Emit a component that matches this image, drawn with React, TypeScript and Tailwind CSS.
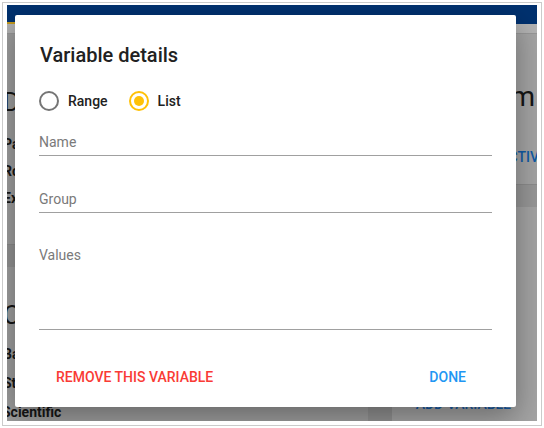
import React from 'react';

const Radio: React.FC<{ checked?: boolean; label: string }> = ({ checked, label }) => (
  <label className="flex items-center">
    <span
      className={`w-[20px] h-[20px] rounded-full border-2 flex items-center justify-center ${
        checked ? 'border-[#ffc107]' : 'border-[#757575]'
      }`}
    >
      {checked && <span className="w-[10px] h-[10px] rounded-full bg-[#ffc107]" />}
    </span>
    <span className="ml-[9px] text-[14px] font-medium text-[#212121] leading-[20px]">{label}</span>
  </label>
);

const Field: React.FC<{ label: string; className?: string; pad?: string }> = ({ label, className, pad }) => (
  <div className={`border-b border-[#a0a0a0] ${pad || 'pb-[3px]'} ${className || ''}`}>
    <div className="h-[20px] leading-[20px] text-[14px] text-[#7a7a7a]">{label}</div>
  </div>
);

export default function App() {
  return (
    <div className="w-[544px] h-[428px] bg-white p-[2px] font-['Roboto',sans-serif]">
      <div className="h-full border border-[#cbcbcb] pt-[2px] px-[4px] pb-[4px] bg-white">
        {/* page behind the dialog, dimmed */}
        <div className="relative w-full h-full overflow-hidden bg-[#9e9e9e]">
          <div className="h-[17px] bg-[#01316f]" />
          <div className="h-[2px] flex">
            <div className="w-[110px] bg-[#c49a1c]" />
            <div className="flex-1 bg-[#01316f]" />
          </div>
          <div className="h-[10px] bg-[#b3b3b3] border-b border-[#979797]" />

          <div className="flex h-full">
            {/* left panel */}
            <div className="w-[361px] flex flex-col pt-[52px] text-[#161616]">
              <div className="-ml-[4px] h-[32px] leading-[32px] text-[26px]">Da</div>
              <div className="mt-[13px] -ml-[4px] text-[14px] font-bold">
                <div className="h-[27px] leading-[27px]">Pa</div>
                <div className="h-[27px] leading-[27px]">Ro</div>
                <div className="h-[27px] leading-[27px]">Ex</div>
              </div>
              <div className="mt-[32px] h-[23px] bg-[#929292] border-t border-[#8a8a8a]" />
              <div className="mt-[32px] -ml-[4px] h-[32px] leading-[32px] text-[26px]">Co</div>
              <div className="mt-[9px] -ml-[4px] text-[14px] font-bold">
                <div className="h-[29px] leading-[29px]">Ba</div>
                <div className="h-[29px] leading-[29px]">St</div>
                <div className="h-[29px] leading-[29px] -ml-[1px]">Scientific</div>
              </div>
            </div>
            {/* gutter */}
            <div className="w-[24px] bg-[#929292]" />
            {/* right panel */}
            <div className="flex-1 flex flex-col pt-[47px] bg-[#a4a4a4] overflow-hidden">
              <div className="h-[32px] leading-[32px] text-[28px] text-[#161616] text-right pr-[2px] whitespace-nowrap">
                Form
              </div>
              <div className="mt-[34px] h-[20px] leading-[20px] text-[14px] font-medium text-[#0f5aa6] text-right -mr-[10px] whitespace-nowrap">
                ACTIVE
              </div>
              <div className="mt-[17px] h-[23px] bg-[#979797] border-t border-[#8c8c8c]" />
              <div className="mt-[187px] h-[20px] leading-[20px] text-[14px] font-medium text-[#165ba6] text-right pr-[26px] whitespace-nowrap">
                ADD VARIABLE
              </div>
            </div>
          </div>

          {/* dialog */}
          <div className="absolute left-[8px] top-[10px] w-[501px] h-[392px] bg-white rounded-[2px] shadow-[0_10px_30px_rgba(0,0,0,0.35)] pl-[25px] pr-[24px] pt-[28px]">
            <h2 className="text-[20px] leading-[24px] font-medium text-[#212121]">Variable details</h2>
            <div className="mt-[22px] -ml-[1px] h-[24px] flex items-center gap-[21px]">
              <Radio label="Range" />
              <Radio label="List" checked />
            </div>
            <Field label="Name" className="mt-[19px] -ml-[1px]" />
            <Field label="Group" className="mt-[33px] -ml-[1px]" />
            <Field label="Values" className="mt-[32px] -ml-[1px]" pad="pb-[64px]" />
            <div className="mt-[29px] h-[36px] flex items-center justify-between ml-[16px] mr-[26px] text-[14px] font-medium">
              <span className="text-[#f93b35]">REMOVE THIS VARIABLE</span>
              <span className="text-[#2196f3]">DONE</span>
            </div>
          </div>
        </div>
      </div>
    </div>
  );
}
